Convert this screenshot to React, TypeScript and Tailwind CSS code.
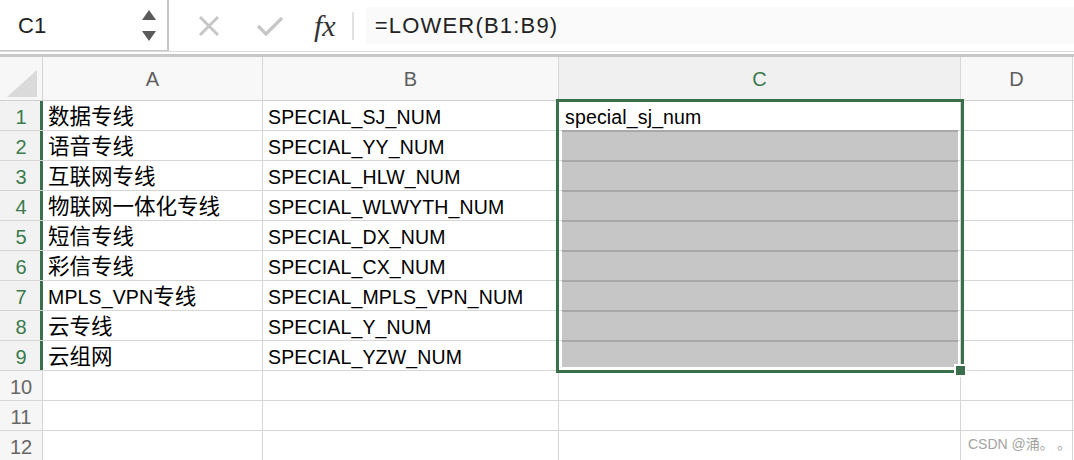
import React from 'react'

const FONT = '"Liberation Sans", "Noto Sans CJK SC", sans-serif'

const rows: [string, string, string][] = [
  ['数据专线', 'SPECIAL_SJ_NUM', 'special_sj_num'],
  ['语音专线', 'SPECIAL_YY_NUM', ''],
  ['互联网专线', 'SPECIAL_HLW_NUM', ''],
  ['物联网一体化专线', 'SPECIAL_WLWYTH_NUM', ''],
  ['短信专线', 'SPECIAL_DX_NUM', ''],
  ['彩信专线', 'SPECIAL_CX_NUM', ''],
  ['MPLS_VPN专线', 'SPECIAL_MPLS_VPN_NUM', ''],
  ['云专线', 'SPECIAL_Y_NUM', ''],
  ['云组网', 'SPECIAL_YZW_NUM', ''],
  ['', '', ''],
  ['', '', ''],
  ['', '', ''],
]

// CJK glyphs render larger than latin ones in the reference
function Mixed({ text }: { text: string }) {
  const parts = text.match(/[\u3000-\u9fff]+|[^\u3000-\u9fff]+/g) || []
  return (
    <>
      {parts.map((p, i) =>
        /[\u3000-\u9fff]/.test(p) ? (
          <span key={i} className="text-[21.5px] tracking-normal">
            {p}
          </span>
        ) : (
          <span key={i}>{p}</span>
        )
      )}
    </>
  )
}

function Toolbar() {
  return (
    <div className="flex h-[52px] border-b border-[#dcdcdc] bg-white">
      {/* name box */}
      <div className="flex w-[169px] items-center justify-between border-r-2 border-b border-[#c4c4c4] pl-[18px] pr-[10px]">
        <span className="text-[22px] text-[#222]">C1</span>
        <div className="flex flex-col gap-[9px]">
          <svg width="16" height="12" viewBox="0 0 16 12">
            <path d="M8 1 L15 11 L1 11 Z" fill="#5a5a5a" />
          </svg>
          <svg width="16" height="12" viewBox="0 0 16 12">
            <path d="M1 1 L15 1 L8 11 Z" fill="#5a5a5a" />
          </svg>
        </div>
      </div>
      <div className="flex items-center pl-[29px]">
        <svg width="22" height="22" viewBox="0 0 22 22">
          <path d="M2 2 L20 20 M20 2 L2 20" stroke="#c6c6c6" strokeWidth="3" />
        </svg>
        <svg width="28" height="22" viewBox="0 0 28 22" className="ml-[36px]">
          <path d="M2 11 L10 19 L26 3" stroke="#c6c6c6" strokeWidth="3.2" fill="none" />
        </svg>
        <span
          className="ml-[30px] text-[30px] italic leading-none text-[#333]"
          style={{ fontFamily: '"Liberation Serif", serif' }}
        >
          fx
        </span>
        <div className="ml-[16px] h-[28px] w-[2px] bg-[#e2e2e2]" />
      </div>
      <div className="my-[7px] ml-[12px] flex flex-1 items-center bg-[#fafafa] pl-[9px]">
        <span className="text-[22px] tracking-[1.2px] text-[#222]">=LOWER(B1:B9)</span>
      </div>
    </div>
  )
}

function ColumnHeader() {
  const cols = [
    { l: 'A', w: 'w-[220px]', sel: false },
    { l: 'B', w: 'w-[296px]', sel: false },
    { l: 'C', w: 'w-[402px]', sel: true },
    { l: 'D', w: 'w-[112px]', sel: false },
  ]
  return (
    <div className="flex h-[44px] border-b border-[#cfcfcf]">
      <div className="relative w-[43px] shrink-0 border-r border-[#d4d4d4] bg-[#f7f7f7]">
        <svg width="32" height="28" viewBox="0 0 32 28" className="absolute left-[6px] top-[13px]">
          <path d="M31 0 L31 27 L1 27 Z" fill="#dadada" />
        </svg>
      </div>
      {cols.map((c) => (
        <div
          key={c.l}
          className={`${c.w} flex shrink-0 items-center justify-center border-r border-[#d8d8d8] text-[20px] ${
            c.sel ? 'bg-[#f0f0f0] text-[#3a7a4c]' : 'bg-[#f8f8f8] text-[#5e5e5e]'
          }`}
        >
          {c.l}
        </div>
      ))}
    </div>
  )
}

function Row({ n, cells }: { n: number; cells: [string, string, string] }) {
  const sel = n <= 9
  const cell = 'flex shrink-0 items-center border-r border-[#d6d6d6] pt-[4px] text-[19.5px] tracking-[0.15px] text-black'
  return (
    <div className="flex h-[30px] border-b border-[#d6d6d6]">
      <div
        className={`flex w-[43px] shrink-0 items-center justify-center pt-[2px] text-[20px] ${
          sel
            ? 'border-r-[3px] border-[#3b6e4a] bg-[#f2f2f2] pl-[2px] text-[#3a7a4c]'
            : 'border-r border-[#d4d4d4] bg-[#f6f6f6] text-[#666]'
        }`}
      >
        {n}
      </div>
      <div className={`${cell} w-[220px] pl-[5px]`}>
        <Mixed text={cells[0]} />
      </div>
      <div className={`${cell} w-[296px] pl-[5px]`}>{cells[1]}</div>
      <div className={`${cell} w-[402px] pl-[6px]`}>{cells[2]}</div>
      <div className="w-[112px] shrink-0 border-r border-[#d6d6d6]" />
    </div>
  )
}

export default function App() {
  return (
    <div
      className="relative h-[460px] w-[1074px] overflow-hidden bg-white"
      style={{ fontFamily: FONT }}
    >
      <Toolbar />
      <div className="h-[2px] bg-white" />
      <div className="h-[3px] bg-[#c8c8c8]" />
      <ColumnHeader />
      {rows.map((r, i) => (
        <Row key={i} n={i + 1} cells={r} />
      ))}

      {/* selection C1:C9 */}
      <div className="absolute left-[556px] top-[99px] flex h-[274px] w-[408px] flex-col border-[3px] border-[#3b6e4a]">
        <div className="h-[28px]" />
        <div className="mx-[3px] h-[237px] overflow-hidden bg-[#c6c6c6]">
          {Array.from({ length: 8 }).map((_, i) => (
            <div key={i} className="h-[30px] border-t-2 border-[#a8a8a8]" />
          ))}
        </div>
      </div>
      {/* fill handle */}
      <div className="absolute left-[954px] top-[364px] h-[13px] w-[13px] border-2 border-white bg-[#3b6e4a]" />

      <div
        className="absolute left-[968px] top-[433px] text-[14px] text-[#a3a3a3]"
        style={{ fontFamily: '"Liberation Sans", "Noto Sans CJK SC", sans-serif' }}
      >
        CSDN @<span style={{ fontFamily: '"Noto Sans CJK SC", sans-serif' }}>涌。 。</span>
      </div>
    </div>
  )
}
